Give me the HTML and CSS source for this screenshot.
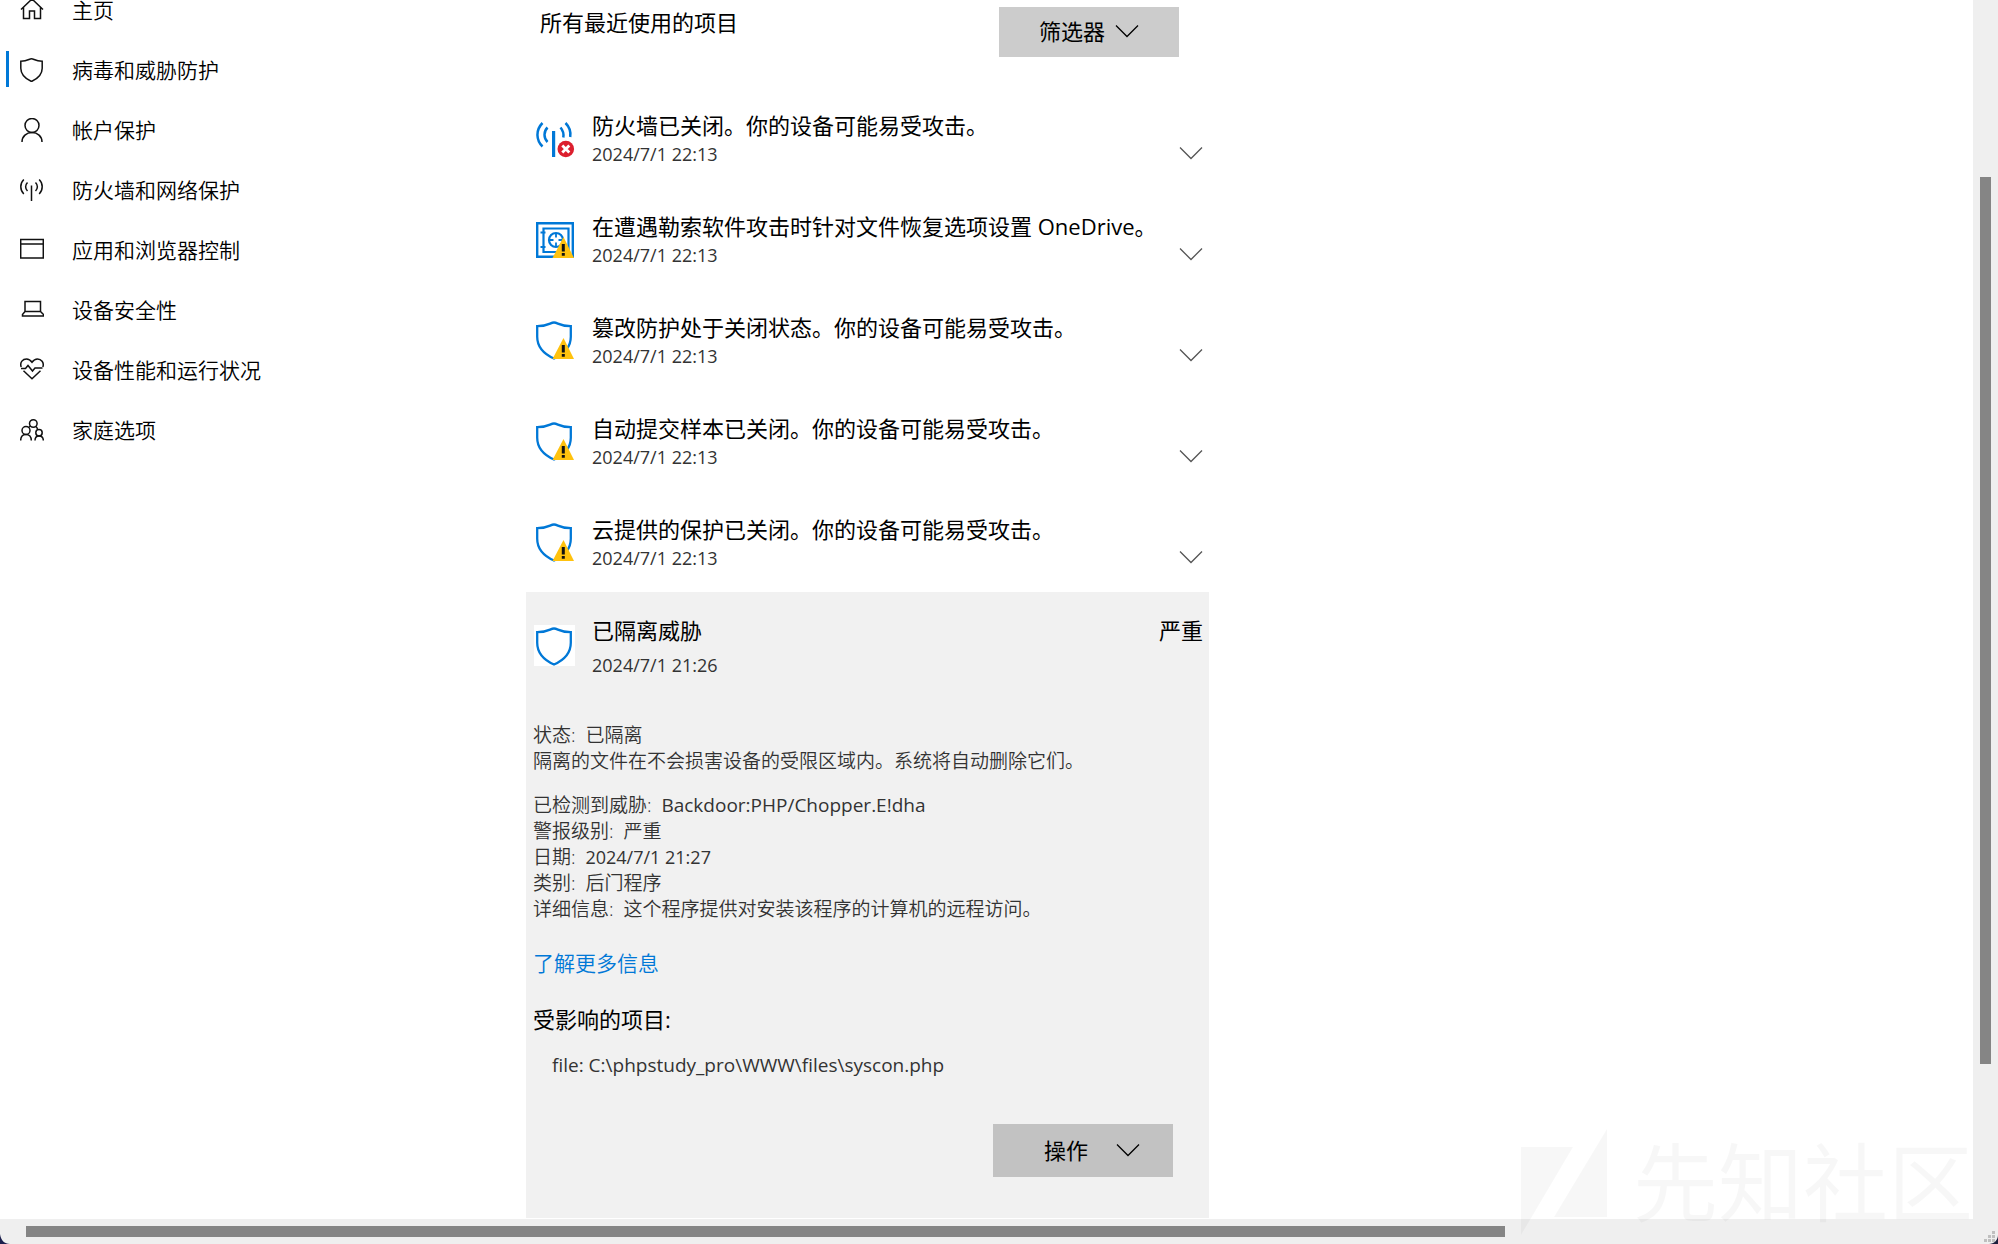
FILE: index.html
```html
<!DOCTYPE html>
<html lang="zh-CN">
<head>
<meta charset="utf-8">
<title>保护历史记录</title>
<link rel="stylesheet" href="styles.css">
</head>
<body>
<svg class="defs" width="0" height="0" aria-hidden="true">
  <defs>
    <symbol id="chevron" viewBox="0 0 24 14"><path d="M1 1.5 12 12.5 23 1.5" fill="none" stroke="currentColor" stroke-width="1.3"/></symbol>
    <symbol id="shield" viewBox="0 0 41 41"><path d="M20 1.5c-4 0-5 3.700-16.800 3.700v10.500C3.200 26 10 33 20 37.500 30 33 36.800 26 36.800 15.700V5.200C25 5.200 24 1.500 20 1.500z" fill="none" stroke="#0078d7" stroke-width="2.300"/></symbol>
    <symbol id="warn" viewBox="0 0 41 41"><path d="M29.500 17 40 38H18.500z" fill="#ffc20e"/><path d="M27.800 24h3v7.500h-3zM27.800 33h3v2.800h-3z" fill="#111"/></symbol>
  </defs>
</svg>
<div class="window">
  <div class="page">
    <nav class="nav">
      <a class="nav-item" href="#"><svg class="nav-icon" viewBox="0 0 24 24"><path d="M1 11.500 12 1l11 10.500M3.500 9.500V20.500h6V13h5v7.500h6V9.500" /></svg>主页</a>
      <a class="nav-item current" href="#"><svg class="nav-icon" viewBox="0 0 24 24"><path d="M11.500.8C9 .8 8 3.200.8 3.200v7C.8 16.500 5 20.500 11.500 23.500 18 20.500 22.200 16.500 22.200 10.200v-7C15 3.200 14 .8 11.500.8z"/></svg>病毒和威胁防护</a>
      <a class="nav-item" href="#"><svg class="nav-icon" viewBox="0 0 24 24"><circle cx="12" cy="7.500" r="7"/><path d="M2 24c0-5.800 4.500-9.500 10-9.500s10 3.700 10 9.500"/></svg>帐户保护</a>
      <a class="nav-item" href="#"><svg class="nav-icon" viewBox="0 0 24 24"><path d="M3.800 1.500c-4 4-4 10.500 0 14.500M19.200 1.500c4 4 4 10.500 0 14.500M7.500 4.500c-2.500 2.500-2.500 6 0 8.500M15.500 4.500c2.500 2.500 2.500 6 0 8.500M11.500 7.500V23"/></svg>防火墙和网络保护</a>
      <a class="nav-item" href="#"><svg class="nav-icon" viewBox="0 0 24 24"><path d="M.7 1.500h22.600v18.500H.7zM.7 6h22.600"/></svg>应用和浏览器控制</a>
      <a class="nav-item" href="#"><svg class="nav-icon" viewBox="0 0 24 24"><path d="M5 3.500h15.500v10H5zM5 13.500l-2.500 3v1.500h21v-1.500l-3-3"/></svg>设备安全性</a>
      <a class="nav-item" href="#"><svg class="nav-icon" viewBox="0 0 24 24"><path d="M1.200 9C-.5 4 3 1 6.500 1 9.500 1 11 2.800 12 4.200 13 2.800 14.500 1 17.500 1 21 1 24.500 4.500 22.800 9M1 10.500h4.500L8 7.500l4.500 5.500 2.500-3h7.500M3.500 12.800l8.500 8 8.500-8"/></svg>设备性能和运行状况</a>
      <a class="nav-item" href="#"><svg class="nav-icon" viewBox="0 0 24 24"><circle cx="13.300" cy="5.500" r="3.800"/><circle cx="6" cy="12.500" r="4"/><circle cx="19" cy="14.800" r="3.200"/><path d="M.7 22.500c0-4 2-6 5.300-6s5.300 2 5.300 6M15 22.500c0-3 1.500-4.500 4-4.500s4.300 1.500 4.300 4.500M8.500 9.500l2-1.500M16 8.500c1 1 1.500 2 1.500 3"/></svg>家庭选项</a>
    </nav>
    <main class="history">
      <header class="toolbar">
        <h1 class="toolbar-title">所有最近使用的项目</h1>
        <button class="menu-button" type="button">筛选器<svg class="chevron"><use href="#chevron"/></svg></button>
      </header>
      <ul class="events">
        <li class="event">
          <svg class="event-icon" viewBox="0 0 41 41"><path d="M8.500 4c-7 7-6.500 17 0 23.500M31.500 4c4 4 5.500 9 4.700 14M13.500 8.500c-4 4-4 10.500 0 14.500M26.500 8.500c2.500 3 3.500 6 2.800 10" fill="none" stroke="#0078d7" stroke-width="2.500"/><path d="M18 12h3.200v26H18z" fill="#0078d7"/><circle cx="31.800" cy="30" r="8.300" fill="#dc1f2e"/><path d="M28.300 26.500l7 7M35.300 26.500l-7 7" stroke="#fff" stroke-width="2.800"/></svg>
          <div class="event-text"><h2 class="event-title">防火墙已关闭。你的设备可能易受攻击。</h2><time class="event-time">2024/7/1 22:13</time></div>
          <button class="expand" type="button" aria-label="展开"><svg class="chevron"><use href="#chevron"/></svg></button>
        </li>
        <li class="event">
          <svg class="event-icon" viewBox="0 0 41 41"><g fill="none" stroke="#0078d7"><path d="M3.200 3.200h35.600v33.600H3.200z" stroke-width="2.400"/><path d="M9.500 8.500h25v23.500h-25z" stroke-width="2.200"/><path d="M6.500 12.500h5M6.500 27h5" stroke-width="2.200"/><circle cx="22" cy="20" r="7" stroke-width="2.200"/><path d="M22 13v4.500M22 22.500v4.500M15 20h4.500M24.500 20h4.500" stroke-width="1.800"/></g><use href="#warn"/></svg>
          <div class="event-text"><h2 class="event-title">在遭遇勒索软件攻击时针对文件恢复选项设置 OneDrive。</h2><time class="event-time">2024/7/1 22:13</time></div>
          <button class="expand" type="button" aria-label="展开"><svg class="chevron"><use href="#chevron"/></svg></button>
        </li>
        <li class="event">
          <svg class="event-icon" viewBox="0 0 41 41"><use href="#shield"/><use href="#warn"/></svg>
          <div class="event-text"><h2 class="event-title">篡改防护处于关闭状态。你的设备可能易受攻击。</h2><time class="event-time">2024/7/1 22:13</time></div>
          <button class="expand" type="button" aria-label="展开"><svg class="chevron"><use href="#chevron"/></svg></button>
        </li>
        <li class="event">
          <svg class="event-icon" viewBox="0 0 41 41"><use href="#shield"/><use href="#warn"/></svg>
          <div class="event-text"><h2 class="event-title">自动提交样本已关闭。你的设备可能易受攻击。</h2><time class="event-time">2024/7/1 22:13</time></div>
          <button class="expand" type="button" aria-label="展开"><svg class="chevron"><use href="#chevron"/></svg></button>
        </li>
        <li class="event">
          <svg class="event-icon" viewBox="0 0 41 41"><use href="#shield"/><use href="#warn"/></svg>
          <div class="event-text"><h2 class="event-title">云提供的保护已关闭。你的设备可能易受攻击。</h2><time class="event-time">2024/7/1 22:13</time></div>
          <button class="expand" type="button" aria-label="展开"><svg class="chevron"><use href="#chevron"/></svg></button>
        </li>
      </ul>
      <section class="threat">
        <div class="threat-head">
          <svg class="event-icon tile" viewBox="0 -2 41 41"><use href="#shield"/></svg>
          <div class="event-text"><h2 class="event-title">已隔离威胁</h2><time class="event-time">2024/7/1 21:26</time></div>
          <span class="severity">严重</span>
        </div>
        <div class="details">
          <p class="para">状态:&nbsp; 已隔离<br>隔离的文件在不会损害设备的受限区域内。系统将自动删除它们。</p>
          <p class="para">已检测到威胁:&nbsp; <span class="value">Backdoor:PHP/Chopper.E!dha</span><br>警报级别:&nbsp; 严重<br>日期:&nbsp; <time class="value">2024/7/1 21:27</time><br>类别:&nbsp; 后门程序<br>详细信息:&nbsp; 这个程序提供对安装该程序的计算机的远程访问。</p>
          <a class="more" href="#">了解更多信息</a>
          <h3 class="affected">受影响的项目:</h3>
          <p class="file">file: C:\phpstudy_pro\WWW\files\syscon.php</p>
        </div>
        <button class="menu-button action" type="button">操作<svg class="chevron"><use href="#chevron"/></svg></button>
      </section>
    </main>
  </div>
  <div class="vbar"><div class="vthumb"></div></div>
  <div class="hbar"><div class="hthumb"></div>
    <svg class="grip" viewBox="0 0 16 16"><path d="M2 11h3v3H2zM6 11h3v3H6zM10 11h3v3h-3zM6 7h3v3H6zM10 7h3v3h-3zM10 3h3v3h-3z" fill="#bfbfbf"/><path d="M16 7v9H7c5 0 9-4 9-9z" fill="#1c1f3d"/></svg>
    <svg class="corner" viewBox="0 0 11 11"><path d="M0 0v11h11C5 11 1 7 0 0z" fill="#1c1f4d"/></svg>
  </div>
  <div class="watermark"><svg class="mark" viewBox="0 0 86 106"><path d="M0 18h52L0 106zM86 0v88H33z" fill="currentColor"/></svg>先知社区</div>
</div>
</body>
</html>
```

FILE: styles.css
```css
* { box-sizing: border-box; }
body, h1, h2, h3, p, ul { margin: 0; padding: 0; font-weight: inherit; }
body {
  font-family: "Open Sans", "Noto Sans CJK SC", sans-serif;
  font-weight: 350;
  color: #000;
  background: #fff;
}
.defs { position: absolute; }
button { font: inherit; color: inherit; border: 0; border-radius: 0; padding: 0; background: none; }
a { text-decoration: none; }

.window {
  position: relative;
  display: grid;
  grid-template-columns: minmax(0, 1fr) 25px;
  grid-template-rows: minmax(0, 1fr) 25px;
  height: 100vh;
  overflow: hidden;
}
.page { display: flex; overflow: hidden; }

.nav { flex: 0 0 526px; margin-top: -20px; }
.nav-item {
  display: flex;
  align-items: center;
  gap: 28px;
  height: 60px;
  padding-left: 20px;
  font-size: 21px;
  line-height: 28px;
  color: #000;
}
.nav-icon { width: 24px; height: 24px; fill: none; stroke: #111; stroke-width: 1.5; }
.current { background: linear-gradient(#0078d7, #0078d7) 6px 11px / 3px 36px no-repeat; }

.history { flex: 0 1 683px; display: flex; flex-direction: column; }
.toolbar {
  display: flex;
  justify-content: space-between;
  align-items: flex-start;
  height: 87px;
  padding: 7px 30px 0 14px;
}
.toolbar-title { font-size: 22px; line-height: 30px; font-weight: 400; }
.menu-button {
  display: flex;
  align-items: center;
  justify-content: center;
  gap: 10px;
  width: 180px;
  height: 50px;
  background: #ccc;
  font-size: 22px;
  line-height: 28px;
  font-weight: 400;
  padding-bottom: 2px;
}
.chevron { width: 24px; height: 14px; }

.events { list-style: none; }
.event { display: flex; height: 101px; padding: 24px 6px 0 8px; }
.event-icon { flex: none; width: 41px; height: 41px; margin-top: 8px; }
.event-text { flex: 1; padding-left: 17px; white-space: nowrap; }
.event-title { font-size: 22px; line-height: 28px; font-weight: 400; }
.event-time { display: block; font-size: 18px; line-height: 30px; font-weight: 400; color: #333; }
.expand { align-self: flex-start; margin-top: 35px; height: 14px; display: flex; color: #555; }

.threat { flex: none; display: flex; flex-direction: column; height: 626px; background: #f1f1f1; }
.threat-head { display: flex; padding: 24px 6px 0 8px; }
.tile { background: #fff; margin-top: 9px; }
.threat .event-time { margin-top: 6px; }
.severity { font-size: 22px; line-height: 28px; font-weight: 400; }
.details { padding: 42px 7px 0; font-size: 19px; line-height: 26px; color: #333; }
.value { font-weight: 400; }
time.value { font-size: 18px; line-height: 20px; }
.para { margin-bottom: 18px; }
.more { display: block; margin-top: 28px; font-size: 21px; color: #0078d7; }
.affected { margin-top: 29px; font-size: 22px; line-height: 28px; font-weight: 400; color: #000; }
.file { margin-top: 19px; padding-left: 19px; font-weight: 400; }
.action { align-self: flex-end; height: 53px; margin: auto 36px 41px 0; padding-left: 18px; gap: 28px; background: #c2c2c2; }

.vbar, .hbar { background: #efefef; }
.vbar { padding: 177px 7px 155px; }
.vthumb { height: 100%; background: #858585; }
.hbar { grid-column: 1 / -1; position: relative; padding: 7px 0 7px 26px; }
.hthumb { width: 75%; height: 11px; background: #858585; }
.grip { position: absolute; right: 0; bottom: 0; width: 16px; height: 16px; }
.corner { position: absolute; left: 0; bottom: 0; width: 10px; height: 10px; }

.watermark {
  position: absolute;
  right: 25px;
  bottom: 9px;
  display: flex;
  align-items: center;
  gap: 26px;
  font-size: 85px;
  line-height: 106px;
  font-weight: 400;
  color: rgba(0, 0, 0, 0.03);
  pointer-events: none;
}
.mark { width: 86px; height: 106px; }
```
